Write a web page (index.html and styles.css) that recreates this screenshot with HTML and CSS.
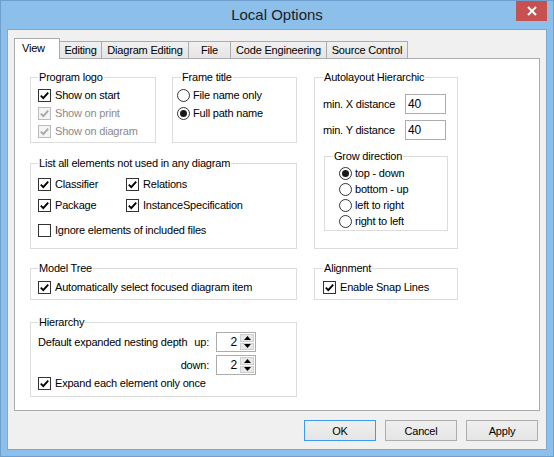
FILE: index.html
```html
<!DOCTYPE html>
<html>
<head>
<meta charset="utf-8">
<link rel="stylesheet" href="styles.css">
</head>
<body>
<div class="window">
  <div class="titlebar">
    <span></span>
    <div class="title">Local Options</div>
    <div class="close"><svg width="10" height="10" viewBox="0 0 10 10"><path d="M1 1 L9 9 M9 1 L1 9" stroke="#fff" stroke-width="2"/></svg></div>
  </div>
  <div class="client">
    <div class="tabs">
      <div class="tab active w-view">View</div>
      <div class="tab w-editing">Editing</div>
      <div class="tab w-diagram">Diagram Editing</div>
      <div class="tab w-file">File</div>
      <div class="tab w-code">Code Engineering</div>
      <div class="tab w-source">Source Control</div>
    </div>
    <div class="panel">
      <div class="layout">
        <div class="leftstack">
          <div class="toprow">
            <fieldset class="group g-logo">
              <legend>Program logo</legend>
              <label class="row"><span class="cb on"><svg viewBox="0 0 11 11"><path d="M1.8 5.6 L4.3 8.1 L9.2 2.6"/></svg></span>Show on start</label>
              <label class="row disabled"><span class="cb on dis"><svg viewBox="0 0 11 11"><path d="M1.8 5.6 L4.3 8.1 L9.2 2.6"/></svg></span>Show on print</label>
              <label class="row disabled"><span class="cb on dis"><svg viewBox="0 0 11 11"><path d="M1.8 5.6 L4.3 8.1 L9.2 2.6"/></svg></span>Show on diagram</label>
            </fieldset>
            <fieldset class="group g-frame">
              <legend>Frame title</legend>
              <label class="row"><span class="rb"></span>File name only</label>
              <label class="row"><span class="rb sel"></span>Full path name</label>
            </fieldset>
          </div>
          <fieldset class="group g-list">
            <legend>List all elements not used in any diagram</legend>
            <div class="twocol">
              <label class="row"><span class="cb on"><svg viewBox="0 0 11 11"><path d="M1.8 5.6 L4.3 8.1 L9.2 2.6"/></svg></span>Classifier</label>
              <label class="row"><span class="cb on"><svg viewBox="0 0 11 11"><path d="M1.8 5.6 L4.3 8.1 L9.2 2.6"/></svg></span>Relations</label>
              <label class="row"><span class="cb on"><svg viewBox="0 0 11 11"><path d="M1.8 5.6 L4.3 8.1 L9.2 2.6"/></svg></span>Package</label>
              <label class="row"><span class="cb on"><svg viewBox="0 0 11 11"><path d="M1.8 5.6 L4.3 8.1 L9.2 2.6"/></svg></span>InstanceSpecification</label>
            </div>
            <label class="row ignore"><span class="cb"></span>Ignore elements of included files</label>
          </fieldset>
        </div>
        <fieldset class="group g-auto">
          <legend>Autolayout Hierarchic</legend>
          <div class="field"><span class="flabel">min. X distance</span><span class="input">40</span></div>
          <div class="field"><span class="flabel">min. Y distance</span><span class="input">40</span></div>
          <fieldset class="group g-grow">
            <legend>Grow direction</legend>
            <label class="row r16"><span class="rb sel"></span>top - down</label>
            <label class="row r16"><span class="rb"></span>bottom - up</label>
            <label class="row r16"><span class="rb"></span>left to right</label>
            <label class="row r16"><span class="rb"></span>right to left</label>
          </fieldset>
        </fieldset>
        <fieldset class="group g-model">
          <legend>Model Tree</legend>
          <label class="row"><span class="cb on"><svg viewBox="0 0 11 11"><path d="M1.8 5.6 L4.3 8.1 L9.2 2.6"/></svg></span>Automatically select focused diagram item</label>
        </fieldset>
        <fieldset class="group g-align">
          <legend>Alignment</legend>
          <label class="row"><span class="cb on"><svg viewBox="0 0 11 11"><path d="M1.8 5.6 L4.3 8.1 L9.2 2.6"/></svg></span>Enable Snap Lines</label>
        </fieldset>
        <fieldset class="group g-hier">
          <legend>Hierarchy</legend>
          <div class="spinrow">
            <span class="slabel"><span>Default expanded nesting depth</span><span>up:</span></span>
            <span class="spin"><span class="sval">2</span><span class="sbtns"><span class="sb"><svg width="7" height="4" viewBox="0 0 7 4"><path d="M0 4 L3.5 0 L7 4Z" fill="#000"/></svg></span><span class="sb"><svg width="7" height="4" viewBox="0 0 7 4"><path d="M0 0 L3.5 4 L7 0Z" fill="#000"/></svg></span></span></span>
          </div>
          <div class="spinrow second">
            <span class="slabel end"><span>down:</span></span>
            <span class="spin"><span class="sval">2</span><span class="sbtns"><span class="sb"><svg width="7" height="4" viewBox="0 0 7 4"><path d="M0 4 L3.5 0 L7 4Z" fill="#000"/></svg></span><span class="sb"><svg width="7" height="4" viewBox="0 0 7 4"><path d="M0 0 L3.5 4 L7 0Z" fill="#000"/></svg></span></span></span>
          </div>
          <label class="row r16"><span class="cb on"><svg viewBox="0 0 11 11"><path d="M1.8 5.6 L4.3 8.1 L9.2 2.6"/></svg></span>Expand each element only once</label>
        </fieldset>
      </div>
    </div>
    <div class="buttons">
      <button class="btn default">OK</button>
      <button class="btn">Cancel</button>
      <button class="btn">Apply</button>
    </div>
  </div>
</div>
</body>
</html>
```
FILE: styles.css
```css
* { box-sizing: border-box; }
html, body { margin: 0; padding: 0; }
body {
  width: 554px;
  height: 457px;
  overflow: hidden;
  font-family: "Liberation Sans", Arial, sans-serif;
  font-size: 11px;
  letter-spacing: -0.2px;
  color: #000;
}
.window {
  width: 554px;
  height: 457px;
  background: #8dbfeb;
  border: 1px solid #6f9fcf;
  padding: 0 7px 7px 7px;
  display: flex;
  flex-direction: column;
}
.titlebar {
  height: 29px;
  display: grid;
  grid-template-columns: 1fr auto 1fr;
  margin: 0 -7px;
}
.title {
  font-size: 15px;
  letter-spacing: 0;
  line-height: 28px;
  color: #1c1c1c;
}
.close {
  justify-self: end;
  width: 31px;
  height: 20px;
  margin-right: 6px;
  background: #c75050;
  display: flex;
  align-items: center;
  justify-content: center;
}
.client {
  flex: 1;
  background: #f0f0f0;
  padding: 8px 6px 8px 6px;
  box-shadow: 0 0 0 1px #7ea8d0;
  display: flex;
  flex-direction: column;
}
.tabs {
  display: flex;
  align-items: flex-end;
  height: 20px;
  position: relative;
  z-index: 2;
}
.tab {
  height: 17px;
  border: 1px solid #acacac;
  border-bottom: none;
  border-left: none;
  background: linear-gradient(#f0f0f0, #e5e5e5);
  text-align: center;
  line-height: 16px;
  white-space: nowrap;
}
.tab.active {
  height: 21px;
  margin-bottom: -1px;
  background: #fff;
  border-left: 1px solid #acacac;
  line-height: 18px;
  text-align: left;
  padding-left: 7px;
}
.w-view { width: 46px; }
.w-editing { width: 42px; }
.w-diagram { width: 87px; }
.w-file { width: 42px; }
.w-code { width: 96px; }
.w-source { width: 81px; }
.panel {
  height: 353px;
  width: 526px;
  background: #fff;
  border: 1px solid #acacac;
  padding: 11px 0 0 15px;
}
.layout {
  display: grid;
  grid-template-columns: 267px 144px;
  column-gap: 17px;
  row-gap: 12px;
}
.leftstack { display: flex; flex-direction: column; gap: 13px; }
.toprow { display: flex; gap: 16px; }
.group {
  margin: 0;
  min-width: 0;
  border: 1px solid #dcdcdc;
  padding: 0;
}
.group legend {
  padding: 0 1px;
  line-height: 14px;
  height: 14px;
}
.row {
  display: flex;
  align-items: center;
  height: 18px;
  white-space: nowrap;
}
.row.r16 { height: 16px; }
.row.disabled { color: #8a8a8a; }
.cb {
  width: 13px;
  height: 13px;
  border: 1px solid #333;
  background: #fff;
  margin-right: 4px;
  flex: none;
  display: flex;
}
.cb svg { width: 11px; height: 11px; }
.cb svg path { fill: none; stroke: #000; stroke-width: 1.9; }
.cb.dis { border-color: #bcbcbc; background: #f4f4f4; }
.cb.dis svg path { stroke: #a8a8a8; }
.rb {
  width: 13px;
  height: 13px;
  border: 1px solid #333;
  border-radius: 50%;
  background: #fff;
  margin-right: 3px;
  flex: none;
  display: flex;
  align-items: center;
  justify-content: center;
}
.rb.sel::after {
  content: "";
  width: 7px;
  height: 7px;
  border-radius: 50%;
  background: #1a1a1a;
}
.g-logo { width: 126px; padding: 2px 0 2px 7px; }
.g-frame { flex: 1; padding: 2px 0 0 4px; }
.g-frame legend { margin-left: 4px; }
.g-list { padding: 5px 0 9px 7px; }
.twocol {
  display: grid;
  grid-template-columns: 88px auto;
  row-gap: 3px;
}
.ignore { margin-top: 7px; }
.g-auto { padding: 10px 9px 0 8px; }
.field {
  display: flex;
  align-items: center;
  height: 20px;
  margin-bottom: 6px;
}
.flabel { width: 82px; }
.input {
  width: 41px;
  height: 20px;
  border: 1px solid #acacac;
  background: #fff;
  padding-left: 2px;
  line-height: 18px;
  font-size: 12px;
}
.g-grow { margin-top: 9px; margin-left: 1px; padding: 2px 0 1px 14px; }
.g-grow legend { margin-left: -6px; }
.g-model { padding: 3px 0 3px 7px; align-self: start; }
.g-align { padding: 3px 0 3px 8px; align-self: start; }
.g-hier { margin-top: 3px; padding: 3px 0 5px 7px; }
.spinrow {
  display: flex;
  align-items: center;
  height: 20px;
}
.spinrow.second { margin-top: 3px; }
.slabel {
  width: 174px;
  flex: none;
  display: flex;
  justify-content: space-between;
  padding-right: 3px;
  margin-right: 4px;
}
.slabel.end { justify-content: flex-end; }
.spin {
  width: 40px;
  flex: none;
  height: 20px;
  border: 1px solid #acacac;
  background: #fff;
  display: flex;
}
.sval { flex: 1; text-align: right; padding-right: 2px; line-height: 18px; font-size: 12px; }
.sbtns {
  width: 16px;
  flex: none;
  display: flex;
  flex-direction: column;
  padding: 1px;
  gap: 1px;
}
.sb {
  flex: 1;
  background: #e8e8e8;
  border: 1px solid #cfcfcf;
  display: flex;
  align-items: center;
  justify-content: center;
}
.buttons {
  display: flex;
  justify-content: flex-end;
  gap: 9px;
  margin-top: 9px;
  padding-right: 2px;
}
.btn {
  width: 72px;
  height: 21px;
  border: 1px solid #adadad;
  background: linear-gradient(#efefef, #e5e5e5);
  font-family: "Liberation Sans", Arial, sans-serif;
  font-size: 11px;
  letter-spacing: -0.2px;
  color: #000;
  padding: 0;
}
.btn.default { border-color: #3c9bf0; }
```
